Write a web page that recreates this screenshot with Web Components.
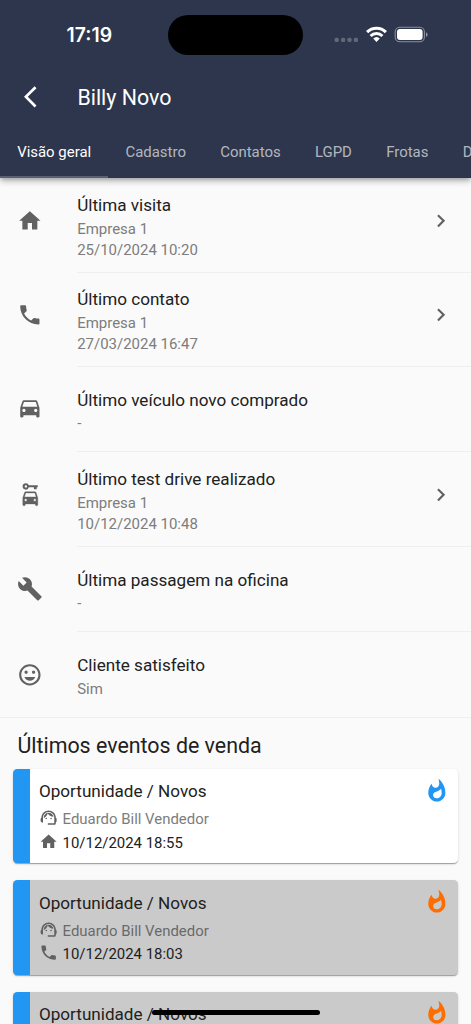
<!DOCTYPE html>
<html lang="pt-BR">
<head>
<meta charset="utf-8">
<title>Billy Novo</title>
<style>
    html, body { margin: 0; height: 100%; overflow: hidden; }
    body {
        background: #fafafa;
        font-family: Roboto, "Liberation Sans", sans-serif;
        color: #212121;
    }
</style>
</head>
<body>
<client-page>
    <app-header slot="header" name="Billy Novo">
        <app-tab active>Visão geral</app-tab>
        <app-tab>Cadastro</app-tab>
        <app-tab>Contatos</app-tab>
        <app-tab>LGPD</app-tab>
        <app-tab>Frotas</app-tab>
        <app-tab>D</app-tab>
    </app-header>

    <info-tile icon="home" label="Última visita" link><div>Empresa 1</div><div>25/10/2024 10:20</div></info-tile>
    <info-tile icon="phone" label="Último contato" link><div>Empresa 1</div><div>27/03/2024 16:47</div></info-tile>
    <info-tile icon="car" label="Último veículo novo comprado" short><div>-</div></info-tile>
    <info-tile icon="testdrive" label="Último test drive realizado" link><div>Empresa 1</div><div>10/12/2024 10:48</div></info-tile>
    <info-tile icon="wrench" label="Última passagem na oficina" short><div>-</div></info-tile>
    <info-tile icon="smile" label="Cliente satisfeito" short last><div>Sim</div></info-tile>

    <event-list heading="Últimos eventos de venda">
        <event-card label="Oportunidade / Novos" seller="Eduardo Bill Vendedor" icon="home" date="10/12/2024 18:55" heat="cold"></event-card>
        <event-card label="Oportunidade / Novos" seller="Eduardo Bill Vendedor" icon="phone" date="10/12/2024 18:03" heat="hot" closed></event-card>
        <event-card label="Oportunidade / Novos" heat="hot" closed></event-card>
    </event-list>
</client-page>

<script>
const CAR = '<path d="M18.92 5.01C18.72 4.42 18.16 4 17.5 4h-11c-.66 0-1.21.42-1.42 1.01L3 11v8c0 .55.45 1 1 1h1c.55 0 1-.45 1-1v-1h12v1c0 .55.45 1 1 1h1c.55 0 1-.45 1-1v-8l-2.08-5.99zM6.5 15c-.83 0-1.5-.67-1.5-1.5S5.67 12 6.5 12s1.5.67 1.5 1.5S7.33 15 6.5 15zm11 0c-.83 0-1.5-.67-1.5-1.5s.67-1.5 1.5-1.5 1.5.67 1.5 1.5-.67 1.5-1.5 1.5zM5 10l1.5-4.5h11L19 10H5z"/>';

const ICONS = {
    home: '<path d="M10 20v-6h4v6h5v-8h3L12 3 2 12h3v8z"/>',
    phone: '<path d="M6.62 10.79c1.44 2.83 3.76 5.14 6.59 6.59l2.2-2.2c.27-.27.67-.36 1.02-.24 1.12.37 2.33.57 3.57.57.55 0 1 .45 1 1V20c0 .55-.45 1-1 1-9.39 0-17-7.61-17-17 0-.55.45-1 1-1h3.5c.55 0 1 .45 1 1 0 1.25.2 2.45.57 3.57.11.35.03.74-.25 1.02l-2.2 2.2z"/>',
    car: CAR,
    // key above a smaller car
    testdrive: `<path fill-rule="evenodd" d="M8.3 1.1a3 3 0 0 1 2.8 2h8.3v1.9h-1v1.7h-2.6V5h-4.7A3 3 0 1 1 8.3 1.1zm0 1.900a1.100 1.100 0 1 0 0 2.200 1.100 1.100 0 0 0 0-2.200z"/><g transform="translate(3.060 5.720) scale(.78 .82)" stroke="currentColor" stroke-width=".4">${CAR}</g>`,
    wrench: '<path d="M22.7 19l-9.1-9.1c.9-2.3.4-5-1.5-6.9-2-2-5-2.4-7.4-1.3L9 6 6 9 1.6 4.7C.4 7.1.9 10.1 2.9 12.1c1.9 1.9 4.6 2.4 6.9 1.5l9.1 9.1c.4.4 1 .4 1.4 0l2.3-2.3c.5-.4.5-1.1.1-1.4z"/>',
    smile: '<path d="M11.99 2C6.47 2 2 6.48 2 12s4.47 10 9.99 10C17.52 22 22 17.52 22 12S17.52 2 11.99 2zM12 20c-4.42 0-8-3.58-8-8s3.58-8 8-8 8 3.58 8 8-3.58 8-8 8zm3.5-9c.83 0 1.5-.67 1.5-1.5S16.33 8 15.5 8 14 8.67 14 9.5s.67 1.5 1.5 1.5zm-7 0c.83 0 1.5-.67 1.5-1.5S9.33 8 8.5 8 7 8.67 7 9.5 7.67 11 8.5 11zm3.5 6.5c2.33 0 4.31-1.46 5.11-3.5H6.89c.8 2.04 2.78 3.5 5.11 3.5z"/>',
    agent: '<path d="M21 12.22C21 6.73 16.74 3 12 3c-4.69 0-9 3.65-9 9.28-.6.34-1 .98-1 1.72v2c0 1.1.9 2 2 2h1v-6.1c0-3.87 3.13-7 7-7s7 3.13 7 7V19h-8v2h8c1.1 0 2-.9 2-2v-1.22c.59-.31 1-.92 1-1.64v-2.3c0-.7-.41-1.31-1-1.62z"/><circle cx="9" cy="13" r="1"/><circle cx="15" cy="13" r="1"/><path d="M18 11.03C17.52 8.18 15.04 6 12.05 6c-3.03 0-6.29 2.51-6.03 6.45 2.47-1.01 4.33-3.21 4.86-5.89 1.31 2.63 4 4.44 7.12 4.47z"/>',
    fire: '<path d="M13.5.67s.74 2.65.74 4.8c0 2.06-1.35 3.73-3.41 3.73-2.07 0-3.63-1.67-3.63-3.73l.03-.36C5.21 7.51 4 10.62 4 14c0 4.42 3.58 8 8 8s8-3.58 8-8C20 8.61 17.41 3.8 13.5.67zM11.71 19c-1.78 0-3.22-1.4-3.22-3.14 0-1.62 1.05-2.76 2.81-3.12 1.77-.36 3.6-1.21 4.62-2.58.39 1.29.59 2.65.59 4.04 0 2.65-2.15 4.8-4.8 4.8z"/>',
    back: '<path d="M11.67 3.87 9.9 2.1 0 12l9.9 9.9 1.77-1.77L3.54 12z"/>',
    chevron: '<path d="M10 6 8.59 7.41 13.17 12l-4.58 4.59L10 18l6-6z"/>',
};

const svg = (name) => `<svg viewBox="0 0 24 24" fill="currentColor" aria-hidden="true">${ICONS[name] || ""}</svg>`;

class BaseElement extends HTMLElement {
    constructor() {
        super();
        this.attachShadow({ mode: "open" });
    }

    connectedCallback() {
        this.shadowRoot.innerHTML = this.template();
    }
}

class MdIcon extends BaseElement {
    template() {
        return `
        <style>
            :host { display: block; flex: none; width: var(--size, 25.7px); height: var(--size, 25.7px); }
            svg { display: block; width: 100%; height: 100%; }
        </style>
        ${svg(this.getAttribute("name"))}`;
    }
}

class StatusBar extends BaseElement {
    template() {
        return `
        <style>
            :host { display: flex; justify-content: center; height: 67.4px; }
            .side { flex: none; width: 168.2px; box-sizing: border-box; }
            .time {
                padding: 23px 0 0 66.5px;
                font: 600 19.4px/24px Inter, sans-serif;
            }
            .island { flex: none; width: 134.5px; height: 39.5px; margin-top: 15px; border-radius: 20px; background: #000; }
            .signals { padding: 25.5px 0 0 31px; }
            .signals svg { display: block; }
        </style>
        <div class="side time">17:19</div>
        <div class="island"></div>
        <div class="side signals">
            <svg width="96" height="18" viewBox="0 0 96 18">
                <g fill="#fff" fill-opacity=".25">
                    <rect x=".6" y="11.7" width="4.2" height="4.2" rx="1.5"/>
                    <rect x="7" y="11.7" width="4.2" height="4.2" rx="1.5"/>
                    <rect x="13.4" y="11.7" width="4.2" height="4.2" rx="1.5"/>
                    <rect x="19.8" y="11.7" width="4.2" height="4.2" rx="1.5"/>
                </g>
                <g fill="none" stroke="#fff" stroke-width="3">
                    <path d="M33.1 6.1a13.3 13.3 0 0 1 18.8 0"/>
                    <path d="M36.6 10a8.4 8.4 0 0 1 11.8 0"/>
                </g>
                <path d="M42.5 16 39.2 12.5a4.8 4.8 0 0 1 6.6 0z" fill="#fff"/>
                <rect x="61.2" y="1.2" width="29.2" height="14.6" rx="4.6" fill="none" stroke="#fff" stroke-opacity=".45" stroke-width="1.1"/>
                <rect x="63" y="3" width="25.6" height="11" rx="3" fill="#fff"/>
                <path d="M92 6.2v4.8q1.6-.7 1.6-2.4T92 6.2z" fill="#fff" fill-opacity=".5"/>
            </svg>
        </div>`;
    }
}

class AppTab extends BaseElement {
    template() {
        return `
        <style>
            :host {
                display: block;
                flex: none;
                box-sizing: border-box;
                height: 50.6px;
                padding: 0 17.15px;
                border-bottom: 2.2px solid transparent;
                font-size: 14.95px;
                line-height: 50.6px;
                color: rgba(255, 255, 255, .65);
            }
            :host([active]) { color: #fff; border-color: #596174; }
        </style>
        <slot></slot>`;
    }
}

class AppHeader extends BaseElement {
    template() {
        return `
        <style>
            :host {
                display: block;
                position: relative;
                height: 178px;
                background: #2d364c;
                color: #fff;
                box-shadow: 0 2px 4px -1px rgba(0,0,0,.2), 0 4px 5px rgba(0,0,0,.14), 0 1px 10px rgba(0,0,0,.12);
            }
            .bar { display: flex; align-items: center; height: 60px; padding-left: 24px; }
            md-icon { margin-top: -1.4px; }
            h1 { margin: 0 0 0 27.7px; font-size: 21.4px; font-weight: 400; }
            nav { display: flex; overflow: hidden; }
        </style>
        <status-bar></status-bar>
        <div class="bar"><md-icon name="back"></md-icon><h1>${this.getAttribute("name")}</h1></div>
        <nav><slot></slot></nav>`;
    }
}

class InfoTile extends BaseElement {
    template() {
        const link = this.hasAttribute("link") ? '<md-icon name="chevron"></md-icon>' : "";
        return `
        <style>
            :host { display: flex; height: 94.2px; padding-left: 17.2px; color: #616161; }
            :host([short]) { height: 85.6px; }
            :host([last]) { box-shadow: inset 0 -1px #efefef; }
            md-icon { margin-top: 29.5px; }
            .body {
                display: flex;
                flex: 1;
                box-sizing: border-box;
                margin-left: 34.3px;
                padding: 14.5px 17.2px 0 0;
                border-bottom: 1px solid #efefef;
            }
            .body md-icon { margin-top: 15px; }
            :host([short]) .body { padding-top: 21.1px; }
            :host([last]) .body { border: 0; }
            .text { flex: 1; font-size: 14.97px; line-height: 21.4px; color: #7d7d7d; }
            h2 { margin: 0 0 1.7px; font-size: 17.13px; font-weight: 400; line-height: 24px; color: #212121; }
            :host([short]) h2 { margin-bottom: 1.3px; }
        </style>
        <md-icon name="${this.getAttribute("icon")}"></md-icon>
        <div class="body">
            <div class="text"><h2>${this.getAttribute("label")}</h2><slot></slot></div>
            ${link}
        </div>`;
    }
}

class EventList extends BaseElement {
    template() {
        return `
        <style>
            :host { display: flex; flex-direction: column; gap: 17px; padding: 0 13px; }
            h2 { margin: 12.9px 0 -8.7px 4.4px; font-size: 21.4px; font-weight: 400; line-height: 30px; }
        </style>
        <h2>${this.getAttribute("heading")}</h2>
        <slot></slot>`;
    }
}

class EventCard extends BaseElement {
    line(type, icon, text) {
        return text ? `<div class="line ${type}"><md-icon name="${icon}"></md-icon>${text}</div>` : "";
    }

    template() {
        const attr = (name) => this.getAttribute(name);
        return `
        <style>
            :host {
                display: flex;
                flex: none;
                box-sizing: border-box;
                height: 94.3px;
                padding: 9.4px 8.6px 0 9px;
                border-left: 17.1px solid #2196f3;
                border-radius: 4.3px;
                background: #fff;
                box-shadow: 0 2px 1px -1px rgba(0,0,0,.2), 0 1px 1px rgba(0,0,0,.14), 0 1px 3px rgba(0,0,0,.12);
            }
            :host([closed]) { background: #cacaca; }
            .text { flex: 1; }
            h3 { margin: 0; font-size: 17.1px; font-weight: 400; line-height: 26px; }
            .line { display: flex; align-items: center; gap: 4.3px; height: 23.7px; font-size: 14.93px; }
            .line md-icon { --size: 19.27px; margin-top: -2.4px; color: #616161; }
            .seller { color: #7d7d7d; padding-top: 3px; }
            :host([closed]) .seller { color: #6a6a6a; }
            .fire { margin-top: -0.6px; color: #2196f3; }
            :host([heat="hot"]) .fire { color: #ff6d00; }
        </style>
        <div class="text">
            <h3>${attr("label")}</h3>
            ${this.line("seller", "agent", attr("seller"))}
            ${this.line("date", attr("icon"), attr("date"))}
        </div>
        <md-icon class="fire" name="fire"></md-icon>`;
    }
}

class ClientPage extends BaseElement {
    template() {
        return `
        <style>
            :host { display: block; position: relative; height: 100vh; overflow: hidden; }
            main { padding-top: 0.5px; }
            /* system gesture bar floats above the list */
            .indicator {
                position: absolute;
                left: 152px;
                bottom: 9px;
                width: 168px;
                height: 5.5px;
                border-radius: 3px;
                background: #000;
            }
        </style>
        <slot name="header"></slot>
        <main><slot></slot></main>
        <div class="indicator"></div>`;
    }
}

customElements.define("md-icon", MdIcon);
customElements.define("status-bar", StatusBar);
customElements.define("app-tab", AppTab);
customElements.define("app-header", AppHeader);
customElements.define("info-tile", InfoTile);
customElements.define("event-list", EventList);
customElements.define("event-card", EventCard);
customElements.define("client-page", ClientPage);
</script>
</body>
</html>
